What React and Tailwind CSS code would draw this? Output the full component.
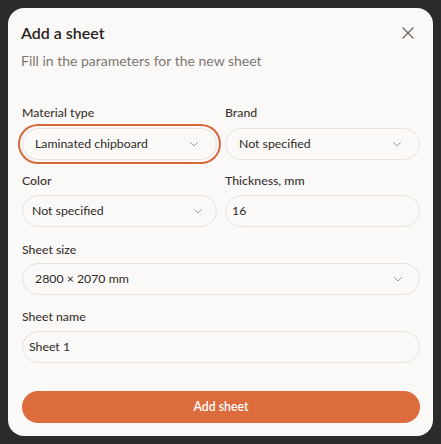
import React from "react";

const Chevron = () => (
  <svg width="12" height="12" viewBox="0 0 24 24" fill="none" stroke="#8a8380" strokeWidth="1.6" strokeLinecap="round" strokeLinejoin="round">
    <path d="M5 9l7 7 7-7" />
  </svg>
);

export default function App() {
  return (
    <div className="w-[441px] h-[444px] bg-[#2b2b2b] pt-[8px] pl-[8px]" style={{ fontFamily: "Lato, 'Noto Sans', sans-serif" }}>
      <div className="w-[425px] h-[428px] bg-[#faf9f7] rounded-[16px] px-[13px] pt-[12px] flex flex-col">
        <div className="flex items-center justify-between h-[26px]">
          <h2 className="text-[16px] font-semibold text-[#2a2420] leading-[26px]">Add a sheet</h2>
          <svg className="mr-[6px]" width="12" height="12" viewBox="0 0 12 12" stroke="#6e6864" strokeWidth="1.4" strokeLinecap="round">
            <path d="M1 1l10 10M11 1L1 11" />
          </svg>
        </div>
        <p className="mt-[5px] text-[14px] leading-[20px] text-[#7d7772]">Fill in the parameters for the new sheet</p>

        <div className="mt-[33px] grid grid-cols-2 gap-x-[8px] pl-[1px]">
          <div className="flex flex-col">
            <label className="text-[12.3px] font-medium text-[#3a3430] leading-[18px]">Material type</label>
            <div className="mt-[6px] h-[32px] rounded-full border border-[#e9e2dc] bg-[#faf9f7] ring-2 ring-[#d9663a] ring-offset-2 ring-offset-[#faf9f7] flex items-center justify-between pl-[12px] pr-[16px]">
              <span className="text-[12.3px] text-[#2f2a27]">Laminated chipboard</span>
              <Chevron />
            </div>
          </div>
          <div className="flex flex-col">
            <label className="text-[12.3px] font-medium text-[#3a3430] leading-[18px]">Brand</label>
            <div className="mt-[6px] h-[32px] rounded-full border border-[#e9e2dc] flex items-center justify-between pl-[13px] pr-[16px]">
              <span className="text-[12.3px] text-[#2f2a27]">Not specified</span>
              <Chevron />
            </div>
          </div>

          <div className="flex flex-col mt-[12px]">
            <label className="text-[12.3px] font-medium text-[#3a3430] leading-[18px]">Color</label>
            <div className="mt-[5px] h-[32px] rounded-full border border-[#e9e2dc] flex items-center justify-between pl-[9px] pr-[12px]">
              <span className="text-[12.3px] text-[#2f2a27]">Not specified</span>
              <Chevron />
            </div>
          </div>
          <div className="flex flex-col mt-[12px]">
            <label className="text-[12.3px] font-medium text-[#3a3430] leading-[18px]">Thickness, mm</label>
            <div className="mt-[5px] h-[32px] rounded-full border border-[#e9e2dc] flex items-center pl-[6px]">
              <span className="text-[12.3px] text-[#2f2a27]">16</span>
            </div>
          </div>
        </div>

        <div className="mt-[14px] pl-[1px] flex flex-col">
          <label className="text-[12.3px] font-medium text-[#3a3430] leading-[18px]">Sheet size</label>
          <div className="mt-[4px] h-[32px] rounded-full border border-[#e9e2dc] flex items-center justify-between pl-[12px] pr-[15px]">
            <span className="text-[12.3px] text-[#2f2a27]">2800 × 2070 mm</span>
            <Chevron />
          </div>
        </div>

        <div className="mt-[13px] pl-[1px] flex flex-col">
          <label className="text-[12.3px] font-medium text-[#3a3430] leading-[18px]">Sheet name</label>
          <div className="mt-[5px] h-[32px] rounded-full border border-[#e9e2dc] flex items-center pl-[6px]">
            <span className="text-[12.3px] text-[#2f2a27]">Sheet 1</span>
          </div>
        </div>

        <div className="mt-[28px] pl-[1px]">
          <button className="w-full h-[32px] rounded-full bg-[#dd6c3d] text-white text-[12.3px] font-semibold">Add sheet</button>
        </div>
      </div>
    </div>
  );
}
